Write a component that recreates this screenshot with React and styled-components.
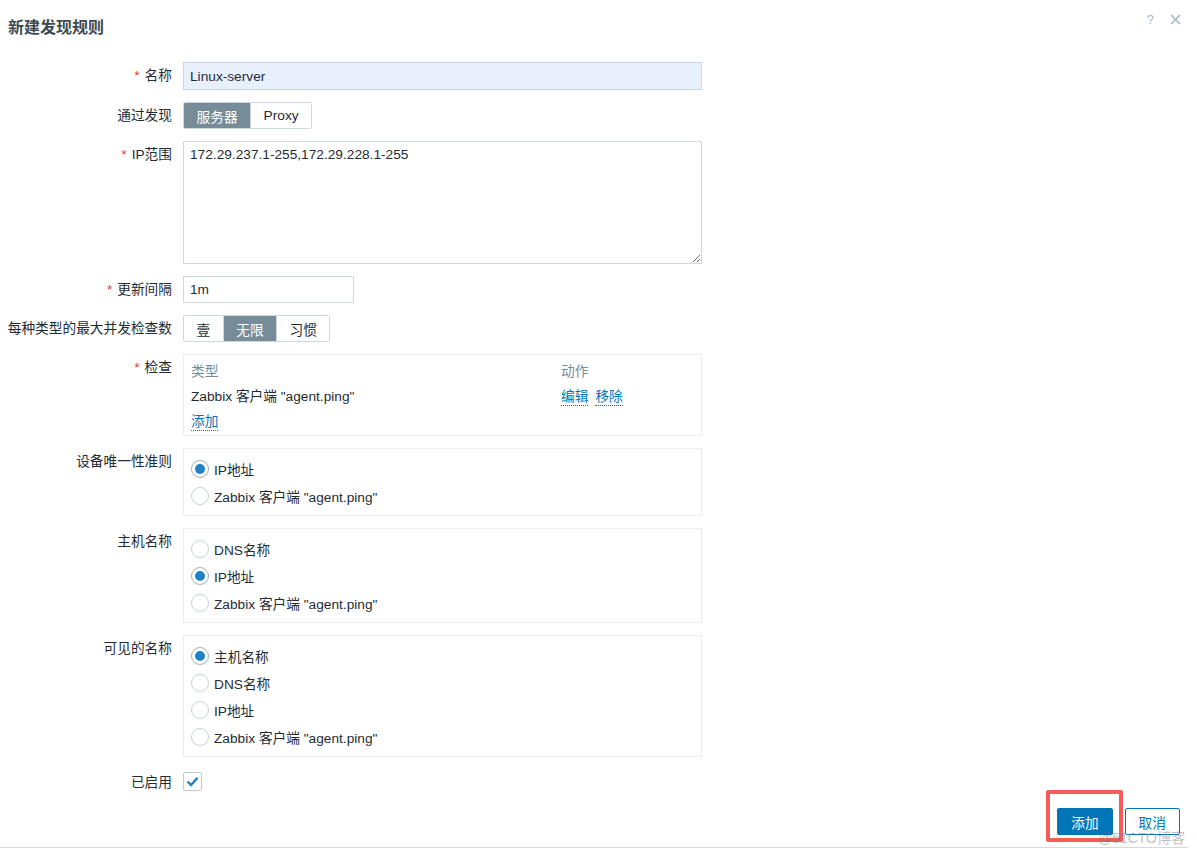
import React from 'react';
import styled, { createGlobalStyle } from 'styled-components';

const FONT = `"Liberation Sans", Arial, "Noto Sans CJK SC", sans-serif`;

const Global = createGlobalStyle`
  html, body { margin: 0; padding: 0; background: #fff; }
  body { font-family: ${FONT}; font-size: 13.7px; color: #1f2c33; }
  * { box-sizing: border-box; }
`;

const Dialog = styled.div`
  width: 1188px;
  height: 848px;
  display: flex;
  flex-direction: column;
  border-bottom: 1px solid #d5d9dc;
`;

const Header = styled.div`
  display: flex;
  justify-content: space-between;
  align-items: flex-start;
  padding: 8px 7px 0 8px;
`;

const Title = styled.h4`
  margin: 11px 0 0;
  font-size: 16px;
  font-weight: bold;
  line-height: 18px;
  color: #3e4a52;
`;

const HeaderTools = styled.div`
  display: flex;
  align-items: center;
  gap: 16px;
  height: 22px;
  color: #a9b8c0;
  font-size: 13px;
`;

const Form = styled.div`
  display: flex;
  flex-direction: column;
  gap: 12px;
  margin-top: 25px;
`;

const Row = styled.div`
  display: grid;
  grid-template-columns: 172px 519px;
  column-gap: 11px;
  align-items: start;
`;

const Label = styled.div`
  text-align: right;
  white-space: nowrap;
  line-height: 18px;
  padding-top: 5px;
`;

const Star = styled.span`
  color: #e33734;
  margin-right: 5px;
`;

const TextInput = styled.input`
  width: ${p => p.$w || '100%'};
  height: ${p => p.$h || '28px'};
  border: 1px solid #cfd8dc;
  background: ${p => (p.$autofill ? '#e8f0fe' : '#fff')};
  padding: 0 6px;
  font: inherit;
  color: #1f2c33;
  outline: none;
  border-radius: 0;
`;

const TextArea = styled.textarea`
  width: 100%;
  height: 123px;
  border: 1px solid #cfd8dc;
  padding: 5px 6px;
  font: inherit;
  line-height: 16px;
  color: #1f2c33;
  outline: none;
  resize: vertical;
  display: block;
`;

const Segmented = styled.div`
  display: inline-flex;
  width: max-content;
  height: 27px;
  border: 1px solid #cfd8dc;
  border-radius: 2px;
  overflow: hidden;
`;

const Segment = styled.span`
  display: flex;
  align-items: center;
  padding: 0 12.5px;
  background: ${p => (p.$active ? '#768d99' : '#fff')};
  color: ${p => (p.$active ? '#fff' : '#1f2c33')};
  & + & { border-left: 1px solid #cfd8dc; }
`;

const Box = styled.div`
  border: 1px solid #ebeef0;
  padding: ${p => p.$pad || '6px 7px'};
`;

const TableGrid = styled.div`
  display: grid;
  grid-template-columns: 370px 1fr;
  grid-auto-rows: 25px;
  align-items: center;
`;

const Th = styled.div`
  color: #768d99;
`;

const Actions = styled.div`
  display: flex;
  gap: 7px;
  margin-top: 5px;
`;

const Link = styled.a`
  display: block;
  color: #0275b8;
  text-decoration: none;
  border-bottom: 1px dotted #0275b8;
  line-height: 16px;
  cursor: pointer;
  width: max-content;
`;

const LinkCell = styled.div`
  margin-top: 5px;
`;

const RadioRow = styled.label`
  display: flex;
  align-items: center;
  gap: 5px;
  height: 27px;
`;

const RadioCircle = styled.span`
  width: 18px;
  height: 18px;
  border-radius: 50%;
  border: 1px solid ${p => (p.$checked ? '#9fb1bb' : '#c5d1d7')};
  background: #fff;
  display: flex;
  align-items: center;
  justify-content: center;
  flex: none;
  &::after {
    content: '';
    width: 10px;
    height: 10px;
    border-radius: 50%;
    background: ${p => (p.$checked ? '#1f82c4' : 'transparent')};
  }
`;

const CheckBox = styled.span`
  margin-top: 3px;
  width: 19px;
  height: 19px;
  border: 1px solid #bccad1;
  border-radius: 2px;
  display: flex;
  align-items: center;
  justify-content: center;
`;

const Footer = styled.div`
  position: relative;
  margin-top: auto;
  display: flex;
  justify-content: flex-end;
  gap: 12px;
  padding: 0 8px 12px 0;
`;

const Button = styled.button`
  position: relative;
  height: 27px;
  padding: 0 13px;
  font: inherit;
  border-radius: 2px;
  border: 1px solid #0275b8;
  background: ${p => (p.$primary ? '#0275b8' : '#fff')};
  color: ${p => (p.$primary ? '#fff' : '#0275b8')};
  cursor: pointer;
`;

const Highlight = styled.span`
  position: absolute;
  top: -19px;
  left: -12px;
  right: -11px;
  bottom: -8px;
  border: 4px solid #f45b5b;
  border-radius: 2px;
  pointer-events: none;
`;

const Watermark = styled.span`
  position: absolute;
  right: 3px;
  bottom: 1px;
  font-size: 14px;
  line-height: 16px;
  color: rgba(110, 110, 110, 0.45);
  pointer-events: none;
`;

function Radio({ checked, children }) {
  return (
    <RadioRow>
      <RadioCircle $checked={checked} />
      <span>{children}</span>
    </RadioRow>
  );
}

const AGENT = 'Zabbix 客户端 "agent.ping"';

export default function App() {
  return (
    <>
      <Global />
      <Dialog>
        <Header>
          <Title>新建发现规则</Title>
          <HeaderTools>
            <span>?</span>
            <svg width="11" height="11" viewBox="0 0 11 11">
              <path d="M1 1 L10 10 M10 1 L1 10" stroke="#a9b8c0" strokeWidth="1.6" />
            </svg>
          </HeaderTools>
        </Header>

        <Form>
          <Row>
            <Label><Star>*</Star>名称</Label>
            <TextInput $autofill defaultValue="Linux-server" />
          </Row>
          <Row>
            <Label>通过发现</Label>
            <Segmented>
              <Segment $active>服务器</Segment>
              <Segment>Proxy</Segment>
            </Segmented>
          </Row>
          <Row>
            <Label><Star>*</Star>IP范围</Label>
            <TextArea defaultValue="172.29.237.1-255,172.29.228.1-255" />
          </Row>
          <Row>
            <Label><Star>*</Star>更新间隔</Label>
            <TextInput $w="171px" $h="27px" defaultValue="1m" />
          </Row>
          <Row>
            <Label>每种类型的最大并发检查数</Label>
            <Segmented>
              <Segment>壹</Segment>
              <Segment $active>无限</Segment>
              <Segment>习惯</Segment>
            </Segmented>
          </Row>
          <Row>
            <Label><Star>*</Star>检查</Label>
            <Box $pad="2px 7px 3px">
              <TableGrid>
                <Th>类型</Th>
                <Th>动作</Th>
                <div>{AGENT}</div>
                <Actions>
                  <Link>编辑</Link>
                  <Link>移除</Link>
                </Actions>
                <LinkCell><Link>添加</Link></LinkCell>
              </TableGrid>
            </Box>
          </Row>
          <Row>
            <Label>设备唯一性准则</Label>
            <Box>
              <Radio checked>IP地址</Radio>
              <Radio>{AGENT}</Radio>
            </Box>
          </Row>
          <Row>
            <Label>主机名称</Label>
            <Box>
              <Radio>DNS名称</Radio>
              <Radio checked>IP地址</Radio>
              <Radio>{AGENT}</Radio>
            </Box>
          </Row>
          <Row>
            <Label>可见的名称</Label>
            <Box>
              <Radio checked>主机名称</Radio>
              <Radio>DNS名称</Radio>
              <Radio>IP地址</Radio>
              <Radio>{AGENT}</Radio>
            </Box>
          </Row>
          <Row>
            <Label>已启用</Label>
            <CheckBox>
              <svg width="13" height="11" viewBox="0 0 13 11">
                <path d="M1.5 5.5 L5 9 L11.5 1.8" fill="none" stroke="#1f82c4" strokeWidth="2.4" />
              </svg>
            </CheckBox>
          </Row>
        </Form>

        <Footer>
          <Button $primary>
            添加
            <Highlight />
          </Button>
          <Button>取消</Button>
          <Watermark>@51CTO博客</Watermark>
        </Footer>
      </Dialog>
    </>
  );
}
